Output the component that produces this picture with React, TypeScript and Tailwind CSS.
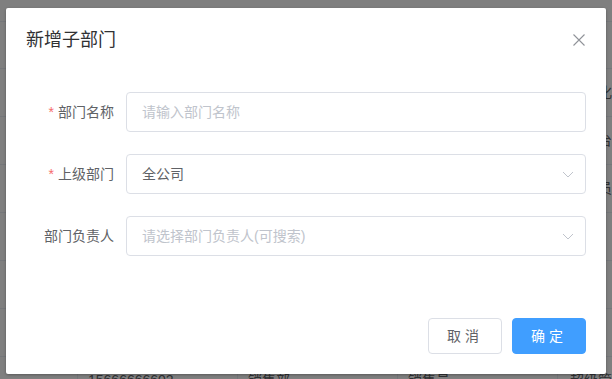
import * as React from "react";

const rows = [
  { phone: "", dept: "", role: "", extra: "自动化" },
  { phone: "", dept: "", role: "", extra: "云平台" },
  { phone: "", dept: "", role: "", extra: "品管员" },
  { phone: "", dept: "", role: "", extra: "主管" },
  { phone: "", dept: "", role: "", extra: "主管" },
  { phone: "", dept: "", role: "", extra: "" },
  { phone: "15666666602", dept: "销售部", role: "销售员", extra: "超级管理员" },
];

function BackgroundTable() {
  return (
    <div className="w-full bg-white">
      <div className="h-[22px] border-b border-[#ebeef5]" />
      <div className="h-[47px] border-b border-[#ebeef5]" />
      {rows.map((r, i) => (
        <div key={i} className="flex h-[48px] border-b border-[#ebeef5] text-[14px] text-[#606266]">
          <div className="w-[78px] shrink-0 border-r border-[#ebeef5]" />
          <div className="flex w-[160px] shrink-0 items-center border-r border-[#ebeef5] pl-[10px]">{r.phone}</div>
          <div className="flex w-[160px] shrink-0 items-center border-r border-[#ebeef5] pl-[10px]">{r.dept}</div>
          <div className="flex w-[160px] shrink-0 items-center border-r border-[#ebeef5] pl-[10px]">{r.role}</div>
          <div className="flex min-w-0 flex-1 items-center overflow-hidden whitespace-nowrap pl-[12px]">{r.extra}</div>
        </div>
      ))}
    </div>
  );
}

function Chevron() {
  return (
    <svg width="14" height="14" viewBox="0 0 14 14" fill="none">
      <polyline points="2,5 7,10 12,5" stroke="#c0c4cc" strokeWidth="1" />
    </svg>
  );
}

function FormItem({ label, required, children }: { label: string; required?: boolean; children: React.ReactNode }) {
  return (
    <div className="mb-[22px] flex">
      <label className="flex h-[40px] w-[100px] shrink-0 items-center justify-end pr-[12px] text-[14px] text-[#606266]">
        {required && <span className="mr-[4px] text-[#f56c6c]">*</span>}
        {label}
      </label>
      <div className="flex-1">{children}</div>
    </div>
  );
}

export default function App() {
  return (
    <div
      className="relative h-[379px] w-[612px] overflow-hidden"
      style={{ fontFamily: '"Helvetica Neue", Helvetica, "Noto Sans CJK SC", sans-serif' }}
    >
      <BackgroundTable />

      {/* overlay */}
      <div className="absolute inset-0 bg-black/50" />

      {/* dialog */}
      <div className="absolute left-[6px] top-[8px] w-[600px] rounded-[2px] bg-white shadow-[0_1px_3px_rgba(0,0,0,0.3)]">
        <div className="flex items-center justify-between px-[20px] pb-[10px] pt-[20px]">
          <span className="text-[18px] leading-[24px] text-[#303133]">新增子部门</span>
          <svg width="16" height="16" viewBox="0 0 16 16" fill="none" className="mr-[-1px]">
            <path d="M2.5 2.5 L13.5 13.5 M13.5 2.5 L2.5 13.5" stroke="#909399" strokeWidth="1.1" />
          </svg>
        </div>

        <div className="px-[20px] pb-[30px] pt-[30px]">
          <FormItem label="部门名称" required>
            <div className="flex h-[40px] items-center rounded-[4px] border border-[#dcdfe6] px-[15px] text-[14px] text-[#c0c4cc]">
              请输入部门名称
            </div>
          </FormItem>
          <FormItem label="上级部门" required>
            <div className="flex h-[40px] items-center justify-between rounded-[4px] border border-[#dcdfe6] pl-[15px] pr-[10px] text-[14px] text-[#606266]">
              <span>全公司</span>
              <Chevron />
            </div>
          </FormItem>
          <FormItem label="部门负责人">
            <div className="flex h-[40px] items-center justify-between rounded-[4px] border border-[#dcdfe6] pl-[15px] pr-[10px] text-[14px] text-[#c0c4cc]">
              <span>请选择部门负责人(可搜索)</span>
              <Chevron />
            </div>
          </FormItem>
        </div>

        <div className="flex justify-end gap-[10px] px-[20px] pb-[20px] pt-[10px]">
          <button className="h-[36px] w-[74px] rounded-[4px] border border-[#dcdfe6] bg-white text-[14px] tracking-[4px] text-[#606266]">
            取消
          </button>
          <button className="h-[36px] w-[74px] rounded-[4px] border border-[#409eff] bg-[#409eff] text-[14px] tracking-[4px] text-white">
            确定
          </button>
        </div>
      </div>
    </div>
  );
}
